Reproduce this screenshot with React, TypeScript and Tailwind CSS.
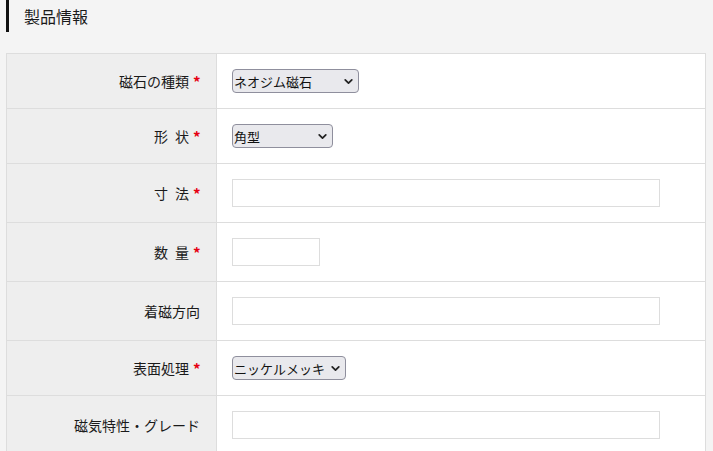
import React from "react";

const font = { fontFamily: '"Noto Sans CJK JP", "Noto Sans", sans-serif' };

function Chevron() {
  return (
    <svg width="11" height="11" viewBox="0 0 10 10" className="shrink-0">
      <path d="M2 3.5 L5 6.5 L8 3.5" fill="none" stroke="#222" strokeWidth="1.6" strokeLinecap="round" strokeLinejoin="round" />
    </svg>
  );
}

function Sel({ value, w }: { value: string; w: string }) {
  return (
    <div className={`flex h-[24px] items-center justify-between rounded-[4px] border border-[#8f8f9d] bg-[#e9e9ed] pl-[1px] pr-[4px] text-[13px] text-[#111] ${w}`}>
      <span className="whitespace-nowrap leading-none">{value}</span>
      <Chevron />
    </div>
  );
}

function Row({ label, req, children, tall }: { label: React.ReactNode; req?: boolean; children: React.ReactNode; tall?: boolean }) {
  return (
    <div className={`flex border-b border-[#dddddd] ${tall ? "h-[59px]" : "h-[55px]"}`}>
      <div className="flex w-[210px] shrink-0 items-center justify-end border-r border-[#dddddd] bg-[#eeeeee] pr-[16px] text-[14px] text-[#1a1a1a]">
        <span className="flex whitespace-nowrap">{label}</span>
        {req && <span className="ml-[4px] w-[7px] text-[15px] leading-none font-bold text-[#e60012]">*</span>}
      </div>
      <div className="flex flex-1 items-center bg-white pl-[15px]">{children}</div>
    </div>
  );
}

function Spaced({ a, b }: { a: string; b: string }) {
  return (
    <span className="flex gap-[7px]">
      <span className="w-[14px] text-center">{a}</span>
      <span className="w-[14px] text-center">{b}</span>
    </span>
  );
}

function Input({ w }: { w: string }) {
  return <div className={`h-[28px] border border-[#dddddd] bg-white ${w}`} />;
}

export default function App() {
  return (
    <div className="min-h-[451px] bg-[#f4f4f4] pl-[6px] pr-[7px]" style={font}>
      <div className="flex h-[32px] items-center border-l-[3px] border-[#111] pl-[15px] text-[16px] text-[#1a1a1a]">
        製品情報
      </div>
      <div className="mt-[21px] border-l border-r border-t border-[#dddddd]">
        <Row label="磁石の種類" req>
          <Sel value="ネオジム磁石" w="w-[127px]" />
        </Row>
        <Row label={<Spaced a="形" b="状" />} req>
          <Sel value="角型" w="w-[101px]" />
        </Row>
        <Row label={<Spaced a="寸" b="法" />} req tall>
          <Input w="w-[428px]" />
        </Row>
        <Row label={<Spaced a="数" b="量" />} req tall>
          <Input w="w-[88px]" />
        </Row>
        <Row label="着磁方向" tall>
          <Input w="w-[428px]" />
        </Row>
        <Row label="表面処理" req>
          <Sel value="ニッケルメッキ" w="w-[114px]" />
        </Row>
        <Row label="磁気特性・グレード" tall>
          <Input w="w-[428px]" />
        </Row>
      </div>
    </div>
  );
}
